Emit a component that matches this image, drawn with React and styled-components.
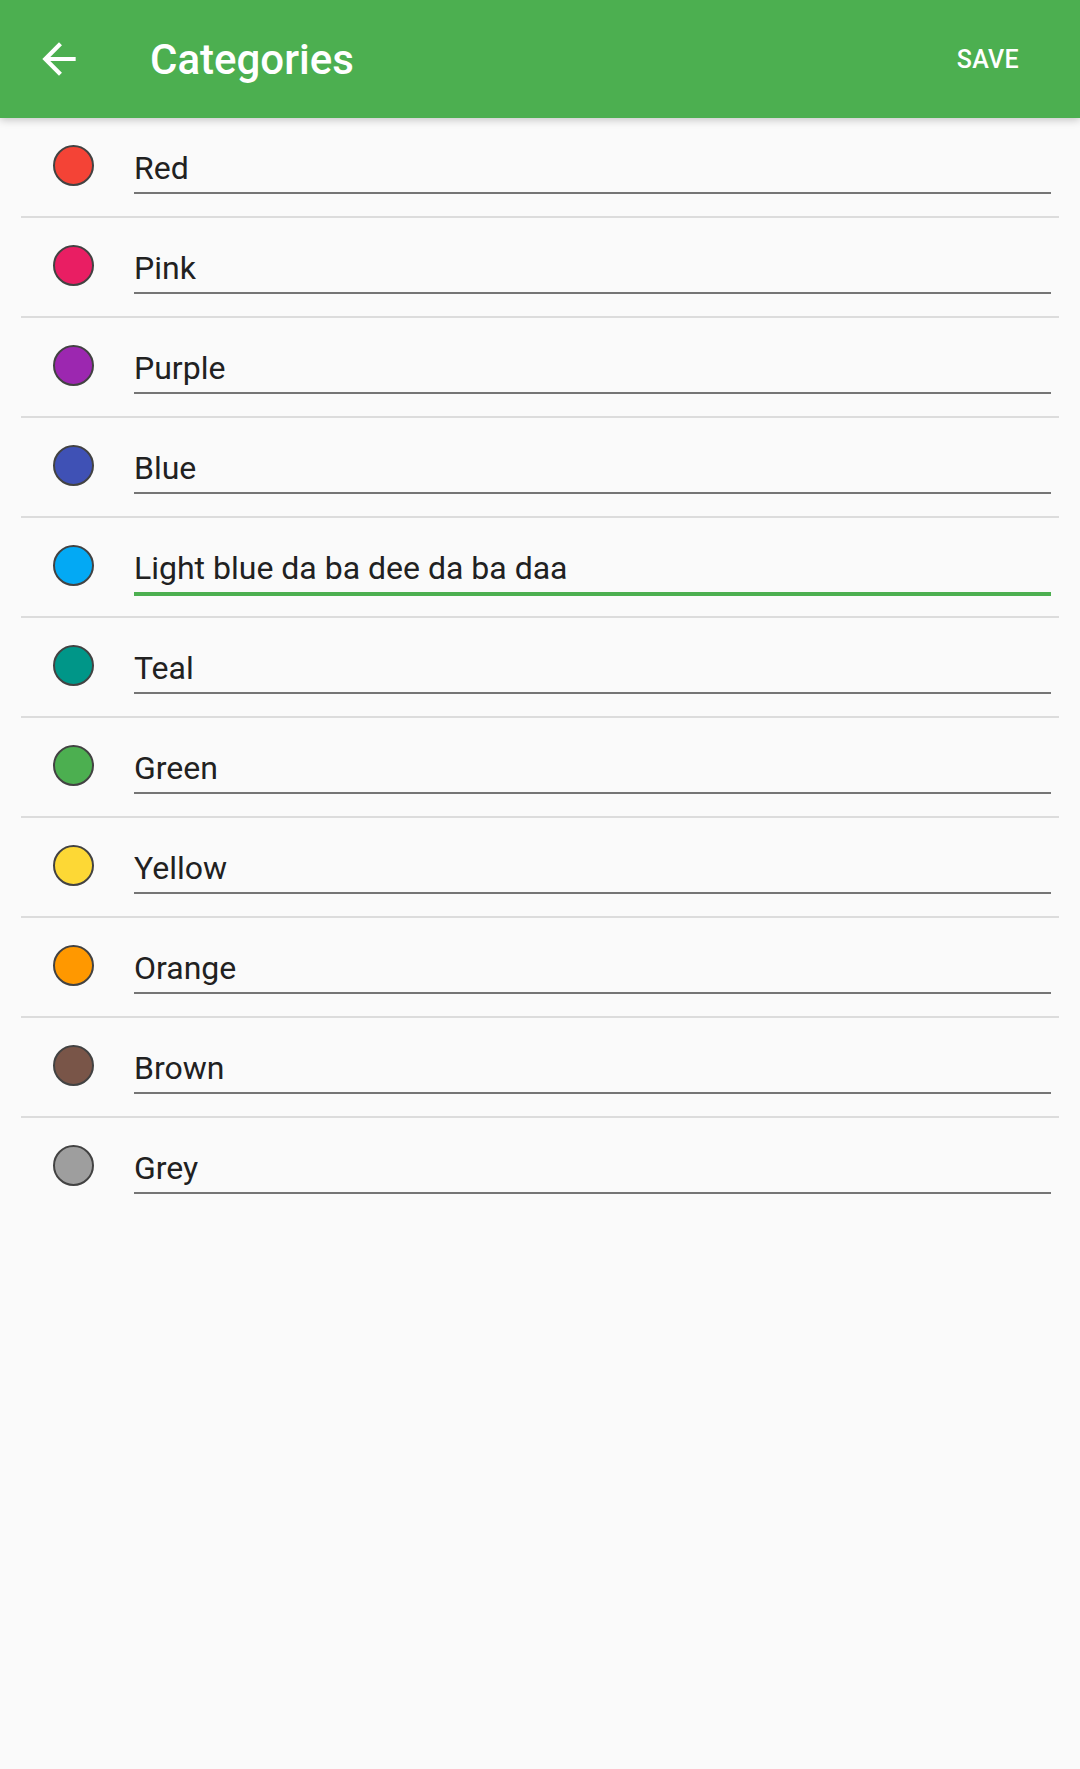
import styled, { createGlobalStyle } from "styled-components";

const categories = [
  { name: "Red", color: "#f44336" },
  { name: "Pink", color: "#e91e63" },
  { name: "Purple", color: "#9c27b0" },
  { name: "Blue", color: "#3f51b5" },
  { name: "Light blue da ba dee da ba daa", color: "#03a9f4", focused: true },
  { name: "Teal", color: "#009688" },
  { name: "Green", color: "#4caf50" },
  { name: "Yellow", color: "#fdd835" },
  { name: "Orange", color: "#ff9800" },
  { name: "Brown", color: "#795548" },
  { name: "Grey", color: "#9e9e9e" },
];

export default function App() {
  return (
    <>
      <GlobalStyle />
      <Page>
        <Toolbar>
          <BackButton aria-label="Back">
            <svg width="50" height="50" viewBox="0 0 24 24">
              <path
                fill="#fff"
                d="M20 11H7.83l5.59-5.59L12 4l-8 8 8 8 1.41-1.41L7.83 13H20v-2z"
              />
            </svg>
          </BackButton>
          <Title>Categories</Title>
          <SaveButton>SAVE</SaveButton>
        </Toolbar>
        <List>
          {categories.map((c) => (
            <Row key={c.name}>
              <Swatch $color={c.color} />
              <Field defaultValue={c.name} $focused={c.focused} />
            </Row>
          ))}
        </List>
      </Page>
    </>
  );
}

const GlobalStyle = createGlobalStyle`
  html, body {
    margin: 0;
    padding: 0;
    background: #fafafa;
  }
  body {
    font-family: Roboto, "Noto Sans", sans-serif;
  }
`;

const Page = styled.div`
  min-height: 1769px;
  background: #fafafa;
`;

const Toolbar = styled.header`
  display: flex;
  align-items: center;
  height: 118px;
  padding: 0 61px 0 34px;
  background: #4caf50;
  box-shadow: 0 2px 8px rgba(0, 0, 0, 0.22);
  position: relative;
  z-index: 1;
`;

const BackButton = styled.button`
  display: flex;
  padding: 0;
  border: 0;
  background: none;
  width: 50px;
  height: 50px;
`;

const Title = styled.h1`
  flex: 1;
  margin: 0 0 0 66px;
  color: #fff;
  font-family: Roboto, sans-serif;
  font-weight: 500;
  font-size: 42px;
`;

const SaveButton = styled.button`
  padding: 0;
  border: 0;
  background: none;
  color: #fff;
  font-family: Roboto, sans-serif;
  font-weight: 500;
  font-size: 25px;
  letter-spacing: 0.3px;
`;

const List = styled.div`
  margin: 0 21px;
`;

const Row = styled.div`
  display: flex;
  align-items: flex-start;
  height: 98px;
  padding: 0 8px 0 32px;
  border-bottom: 2px solid #dcdcdc;

  &:last-child {
    border-bottom-color: transparent;
  }
`;

const Swatch = styled.span`
  flex: none;
  box-sizing: border-box;
  width: 41px;
  height: 41px;
  margin-top: 27px;
  border-radius: 50%;
  border: 2.5px solid #424242;
  background: ${(p) => p.$color};
`;

const Field = styled.input`
  flex: 1;
  min-width: 0;
  margin: 31px 0 0 40px;
  padding: 0 0 5px;
  height: 38px;
  border: 0;
  border-bottom: ${(p) => (p.$focused ? "4px solid #4caf50" : "2px solid #757575")};
  background: transparent;
  color: #212121;
  font-family: Roboto, sans-serif;
  font-size: 32px;
  line-height: 38px;
  outline: none;
  box-sizing: content-box;
`;
